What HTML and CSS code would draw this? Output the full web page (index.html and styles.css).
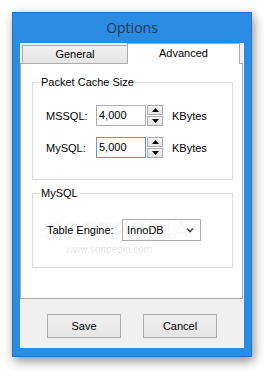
FILE: index.html
```html
<!DOCTYPE html>
<html>
<head>
<meta charset="utf-8">
<link rel="stylesheet" href="styles.css">
</head>
<body>
<div class="window">
  <div class="titlebar">Options</div>
  <div class="client">
    <div class="tabstrip">
      <div class="tab tab-general">General</div>
      <div class="tab tab-advanced">Advanced</div>
    </div>
    <div class="tabpage">
      <div class="group group-cache">
        <span class="group-title">Packet Cache Size</span>
        <div class="row">
          <span class="label">MSSQL:</span>
          <div class="input">4,000</div>
          <div class="spin">
            <div class="spin-btn"><svg width="7" height="4" viewBox="0 0 7 4"><path d="M0 4 L3.5 0 L7 4 Z" fill="#000"/></svg></div>
            <div class="spin-btn"><svg width="7" height="4" viewBox="0 0 7 4"><path d="M0 0 L3.5 4 L7 0 Z" fill="#000"/></svg></div>
          </div>
          <span class="unit">KBytes</span>
        </div>
        <div class="row">
          <span class="label">MySQL:</span>
          <div class="input input-focus">5,000</div>
          <div class="spin">
            <div class="spin-btn"><svg width="7" height="4" viewBox="0 0 7 4"><path d="M0 4 L3.5 0 L7 4 Z" fill="#000"/></svg></div>
            <div class="spin-btn"><svg width="7" height="4" viewBox="0 0 7 4"><path d="M0 0 L3.5 4 L7 0 Z" fill="#000"/></svg></div>
          </div>
          <span class="unit">KBytes</span>
        </div>
      </div>
      <div class="group group-mysql">
        <span class="group-title">MySQL</span>
        <div class="row">
          <span class="label label-engine">Table Engine:</span>
          <div class="combo">
            <span>InnoDB</span>
            <svg width="8" height="6" viewBox="0 0 8 6"><path d="M1 1.5 L4 4.5 L7 1.5" fill="none" stroke="#444" stroke-width="1.6"/></svg>
          </div>
        </div>
        <div class="watermark">SOFTPEDIA<sup>™</sup></div>
        <div class="watermark-url">www.softpedia.com</div>
      </div>
    </div>
    <div class="footer">
      <div class="btn">Save</div>
      <div class="btn">Cancel</div>
    </div>
  </div>
</div>
</body>
</html>
```

FILE: styles.css
```css
html, body {
  margin: 0;
  padding: 0;
  background: #ffffff;
}
body {
  width: 272px;
  height: 377px;
  overflow: hidden;
  font-family: "Liberation Sans", Arial, sans-serif;
  font-size: 11px;
  color: #000;
}
.window {
  box-sizing: border-box;
  margin: 12px 0 0 12px;
  width: 240px;
  height: 345px;
  background: #2b8ce3;
  border: 1px solid #1f76c6;
  padding: 0 7px 8px 7px;
  box-shadow: 2px 4px 10px rgba(0, 0, 0, 0.45);
}
.titlebar {
  height: 30px;
  line-height: 30px;
  text-align: center;
  font-family: "Open Sans", "Liberation Sans", sans-serif;
  font-size: 14px;
  color: #22384a;
}
.client {
  width: 224px;
  height: 305px;
  background: #f0f0f0;
  display: flex;
  flex-direction: column;
}
.tabstrip {
  height: 20px;
  display: flex;
  align-items: flex-end;
  padding-left: 2px;
  position: relative;
  z-index: 1;
}
.tab {
  box-sizing: border-box;
  border: 1px solid #acacac;
  border-bottom: none;
  text-align: center;
}
.tab-general {
  width: 106px;
  height: 18px;
  line-height: 17px;
  background: linear-gradient(#f0f0f0, #e5e5e5);
}
.tab-advanced {
  width: 113px;
  height: 21px;
  margin-bottom: -1px;
  margin-left: -1px;
  line-height: 19px;
  background: #ffffff;
}
.tabpage {
  box-sizing: border-box;
  width: 223px;
  height: 236px;
  background: #ffffff;
  border: 1px solid #acacac;
  padding: 18px 0 0 11px;
}
.group {
  box-sizing: border-box;
  width: 201px;
  border: 1px solid #dcdcdc;
  position: relative;
}
.group-cache {
  height: 98px;
  padding: 22px 0 0 13px;
  display: flex;
  flex-direction: column;
  gap: 11px;
}
.group-mysql {
  height: 75px;
  margin-top: 13px;
  padding: 25px 0 0 14px;
}
.group-title {
  position: absolute;
  top: -7px;
  left: 6px;
  padding: 0 2px;
  background: #ffffff;
  line-height: 13px;
}
.row {
  display: flex;
  align-items: center;
  height: 21px;
}
.group-mysql .row {
  height: 22px;
}
.label {
  width: 50px;
}
.label-engine {
  width: 75px;
}
.input {
  box-sizing: border-box;
  width: 50px;
  height: 21px;
  border: 1px solid #abadb3;
  line-height: 19px;
  padding-left: 2px;
  background: #fff;
}
.input-focus {
  border-color: #569de5;
}
.spin {
  margin-left: 1px;
  height: 21px;
  display: flex;
  flex-direction: column;
  justify-content: space-between;
}
.spin-btn {
  box-sizing: border-box;
  width: 16px;
  height: 10px;
  border: 1px solid #acacac;
  background: linear-gradient(#f2f2f2, #e3e3e3);
  display: flex;
  align-items: center;
  justify-content: center;
}
.unit {
  margin-left: 9px;
}
.combo {
  box-sizing: border-box;
  width: 79px;
  height: 22px;
  border: 1px solid #acacac;
  background: #fff;
  display: flex;
  align-items: center;
  justify-content: space-between;
  padding: 0 6px 0 4px;
}
.watermark {
  position: absolute;
  left: 12px;
  top: 23px;
  font-size: 24px;
  letter-spacing: 1px;
  color: rgba(0, 0, 0, 0.05);
  pointer-events: none;
}
.watermark sup {
  font-size: 8px;
}
.watermark-url {
  position: absolute;
  left: 33px;
  top: 50px;
  font-size: 10px;
  color: rgba(0, 0, 0, 0.13);
  pointer-events: none;
}
.footer {
  flex: 1;
  display: flex;
  justify-content: center;
  gap: 22px;
  padding-top: 15px;
}
.btn {
  box-sizing: border-box;
  width: 74px;
  height: 24px;
  border: 1px solid #acacac;
  background: linear-gradient(#f0f0f0, #e5e5e5);
  text-align: center;
  line-height: 22px;
}
```
